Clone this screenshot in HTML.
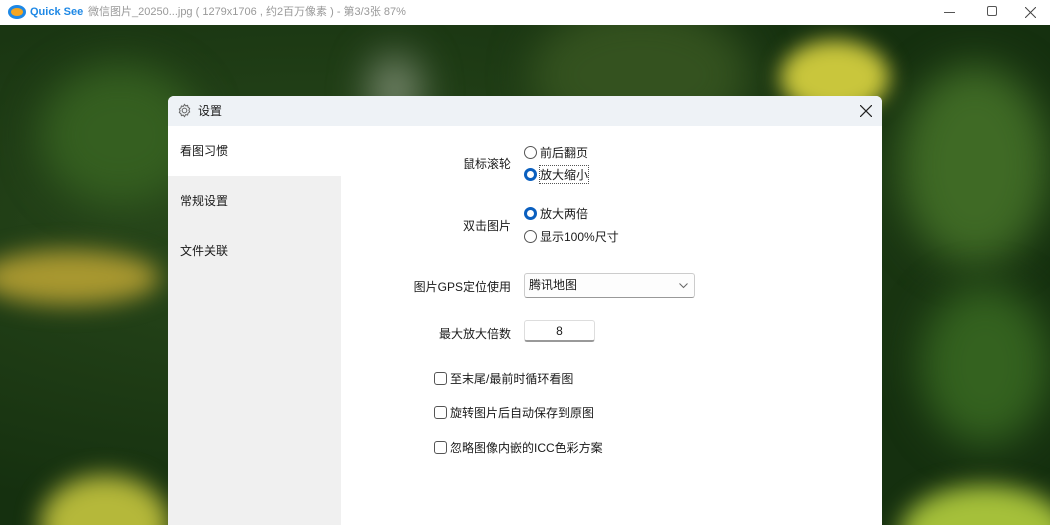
<!DOCTYPE html>
<html><head><meta charset="utf-8"><style>
*{margin:0;padding:0;box-sizing:border-box}
body{width:1050px;height:525px;overflow:hidden;position:relative;font-family:"Liberation Sans","Noto Sans CJK SC",sans-serif;font-size:12px;color:#1a1a1a;background:#1f3a14}
.bg{position:absolute;left:0;top:25px;width:1050px;height:500px;overflow:hidden;background:radial-gradient(ellipse at 30% 40%,#2a4a1c,#15300f 70%)}
.b{position:absolute;border-radius:50%;filter:blur(20px)}
.top{position:absolute;left:0;top:0;width:1050px;height:25px;background:#fff;font-size:11px;color:#999;line-height:25px}
.dlg{position:absolute;left:168px;top:96px;width:714px;height:429px;background:#fff;border-radius:6px 6px 0 0;overflow:hidden}
.tb{height:30px;background:#eef2f6;position:relative;line-height:30px;padding-left:30px;font-size:12px}
.side{position:absolute;left:0;top:30px;width:173px;height:400px;background:#f0f0f0}
.side div{height:50px;line-height:50px;padding-left:12px;font-size:12px}
.lab{position:absolute;text-align:right;width:200px}
.opt{position:absolute;display:flex;align-items:center;gap:3px}
.r{width:13px;height:13px;border:1px solid #555;border-radius:50%;display:inline-block;background:#fff}
.r.on{border:3.5px solid #0a5fbf}
.c{width:13px;height:13px;border:1px solid #555;border-radius:3px;display:inline-block;background:#fff}
</style></head><body>
<div class="bg">
<div class="b" style="left:40px;top:40px;width:160px;height:140px;background:#355f20"></div>
<div class="b" style="left:370px;top:30px;width:50px;height:70px;background:#7a8a70"></div>
<div class="b" style="left:530px;top:-20px;width:220px;height:140px;background:#34521f"></div>
<div class="b" style="left:780px;top:15px;width:110px;height:75px;background:#c9c63c;filter:blur(10px)"></div>
<div class="b" style="left:900px;top:40px;width:150px;height:200px;background:#3f6a25"></div>
<div class="b" style="left:-20px;top:225px;width:180px;height:55px;background:#a99830;filter:blur(12px)"></div>
<div class="b" style="left:40px;top:450px;width:130px;height:100px;background:#b5b83a;filter:blur(12px)"></div>
<div class="b" style="left:900px;top:460px;width:170px;height:100px;background:#a5c03a;filter:blur(12px)"></div>
<div class="b" style="left:920px;top:260px;width:130px;height:160px;background:#34621f"></div>
</div>
<div class="top"><span style="position:absolute;left:8px;top:5px;width:18px;height:14px;border-radius:50%;background:#f5a623;border:3px solid #1e88e5"></span><span style="position:absolute;left:30px;color:#1e88e5;font-weight:bold;font-size:11px">Quick See</span><span style="position:absolute;left:88px">微信图片_20250...jpg ( 1279x1706 , 约2百万像素 ) - 第3/3张 87%</span>
<span style="position:absolute;left:944px;top:12px;width:11px;height:1px;background:#555"></span>
<span style="position:absolute;left:987px;top:6px;width:10px;height:10px;border:1px solid #555;border-radius:2px"></span>
<svg style="position:absolute;left:1025px;top:7px" width="11" height="11"><path d="M0 0L11 11M11 0L0 11" stroke="#444" stroke-width="1"/></svg></div>
<div class="dlg">
<div class="tb"><svg style="position:absolute;left:9px;top:7px" width="15" height="15" viewBox="0 0 16 16" fill="none" stroke="#666" stroke-width="1.1"><circle cx="8" cy="8" r="2.5"/><path d="M8 1.5l1.3 1.6 2-.5.5 2 1.7 1.2-.8 1.9.8 1.9-1.7 1.2-.5 2-2-.5L8 14.5l-1.3-1.6-2 .5-.5-2L2.5 10.2l.8-1.9-.8-1.9 1.7-1.2.5-2 2 .5z"/></svg>设置<svg style="position:absolute;right:10px;top:9px" width="12" height="12"><path d="M0 0L12 12M12 0L0 12" stroke="#222" stroke-width="1.2"/></svg></div>
<div class="side"><div style="background:#fff">看图习惯</div><div>常规设置</div><div>文件关联</div></div>
<div class="lab" style="left:143px;top:59px">鼠标滚轮</div>
<div class="opt" style="left:356px;top:48px"><span class="r"></span>前后翻页</div>
<div class="opt" style="left:356px;top:70px"><span class="r on"></span><span style="outline:1px dotted #555">放大缩小</span></div>
<div class="lab" style="left:143px;top:121px">双击图片</div>
<div class="opt" style="left:356px;top:109px"><span class="r on"></span>放大两倍</div>
<div class="opt" style="left:356px;top:132px"><span class="r"></span>显示100%尺寸</div>
<div class="lab" style="left:143px;top:182px">图片GPS定位使用</div>
<div style="position:absolute;left:356px;top:177px;width:171px;height:25px;border:1px solid #ccc;border-bottom-color:#999;border-radius:3px;background:#fdfdfd;padding-left:4px;line-height:23px">腾讯地图<svg style="position:absolute;right:6px;top:9px" width="9" height="6"><path d="M0.5 0.5L4.5 4.5L8.5 0.5" fill="none" stroke="#666"/></svg></div>
<div class="lab" style="left:143px;top:229px">最大放大倍数</div>
<div style="position:absolute;left:356px;top:224px;width:71px;height:22px;border:1px solid #ddd;border-bottom:2px solid #999;border-radius:3px;text-align:center;line-height:20px">8</div>
<div class="opt" style="left:266px;top:274px"><span class="c"></span>至末尾/最前时循环看图</div>
<div class="opt" style="left:266px;top:308px"><span class="c"></span>旋转图片后自动保存到原图</div>
<div class="opt" style="left:266px;top:343px"><span class="c"></span>忽略图像内嵌的ICC色彩方案</div>
</div>
</body></html>
